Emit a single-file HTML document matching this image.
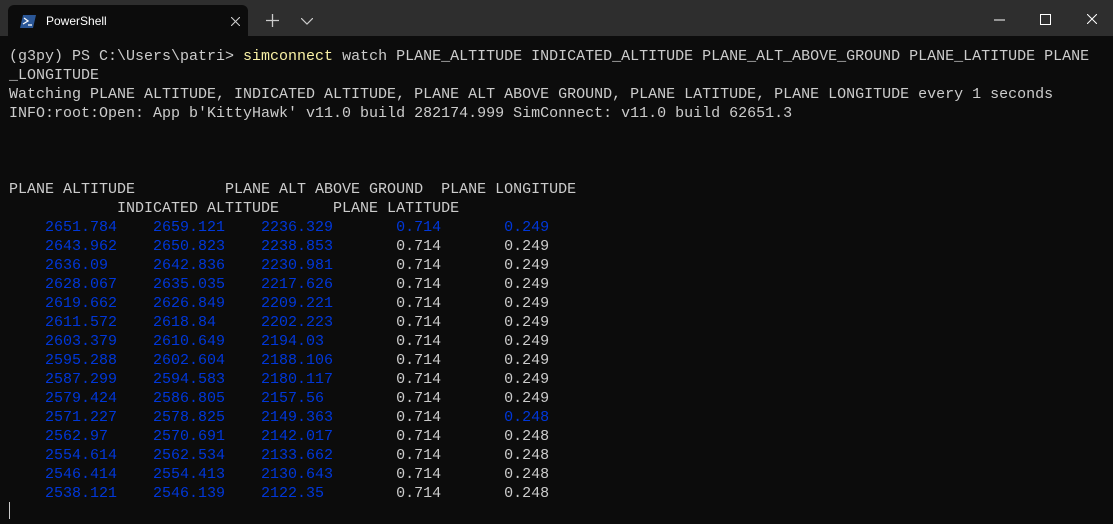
<!DOCTYPE html>
<html><head><style>
body{margin:0;width:1113px;height:524px;background:#0c0c0c;overflow:hidden;position:relative;font-family:"Liberation Sans",sans-serif}
#bar{position:absolute;left:0;top:0;width:1113px;height:36px;background:#2e2e2e}
#tab{position:absolute;left:8px;top:5px;width:240px;height:31px;background:#0c0c0c;border-radius:6px 6px 0 0}
#tab span{position:absolute;left:38px;top:9px;color:#fff;font-size:12px}
pre{position:absolute;left:9px;top:47px;margin:0;font-family:"Liberation Mono",monospace;font-size:15px;line-height:19px;color:#cccccc;letter-spacing:0}
.b{color:#0037da}.y{color:#f9f1a5}
#cur{position:absolute;left:9px;top:502px;width:1px;height:17px;background:#ccc}
</style></head><body>
<div id="bar">
<div id="tab">
<svg style="position:absolute;left:12px;top:10px" width="16" height="13" viewBox="0 0 16 13"><path d="M3 0h13l-3 13H0z" fill="#2b5797"/><path d="M4 3l4 3-5 3" stroke="#fff" stroke-width="1.3" fill="none"/><path d="M8 10h4" stroke="#fff" stroke-width="1.3"/></svg>
<span>PowerShell</span>
<svg style="position:absolute;left:223px;top:12px" width="9" height="9"><path d="M0 0L9 9M9 0L0 9" stroke="#ccc" stroke-width="1.1"/></svg>
</div>
<svg style="position:absolute;left:266px;top:14px" width="13" height="13"><path d="M6.5 0v13M0 6.5h13" stroke="#ccc" stroke-width="1.3"/></svg>
<svg style="position:absolute;left:301px;top:18px" width="12" height="7"><path d="M0 0l6 6 6-6" stroke="#ccc" stroke-width="1.2" fill="none"/></svg>
<svg style="position:absolute;left:994px;top:19px" width="11" height="2"><path d="M0 1h11" stroke="#fff"/></svg>
<svg style="position:absolute;left:1040px;top:14px" width="11" height="11"><rect x=".5" y=".5" width="10" height="10" stroke="#fff" fill="none"/></svg>
<svg style="position:absolute;left:1087px;top:14px" width="10" height="10"><path d="M0 0L10 10M10 0L0 10" stroke="#fff"/></svg>
</div>
<pre>(g3py) PS C:\Users\patri&gt; <span class="y">simconnect</span> watch PLANE_ALTITUDE INDICATED_ALTITUDE PLANE_ALT_ABOVE_GROUND PLANE_LATITUDE PLANE
_LONGITUDE
Watching PLANE ALTITUDE, INDICATED ALTITUDE, PLANE ALT ABOVE GROUND, PLANE LATITUDE, PLANE LONGITUDE every 1 seconds
INFO:root:Open: App b'KittyHawk' v11.0 build 282174.999 SimConnect: v11.0 build 62651.3



PLANE ALTITUDE          PLANE ALT ABOVE GROUND  PLANE LONGITUDE
            INDICATED ALTITUDE      PLANE LATITUDE
    <span class="b">2651.784    2659.121    2236.329       0.714       0.249</span>
    <span class="b">2643.962    2650.823    2238.853</span>       0.714       0.249
    <span class="b">2636.09     2642.836    2230.981</span>       0.714       0.249
    <span class="b">2628.067    2635.035    2217.626</span>       0.714       0.249
    <span class="b">2619.662    2626.849    2209.221</span>       0.714       0.249
    <span class="b">2611.572    2618.84     2202.223</span>       0.714       0.249
    <span class="b">2603.379    2610.649    2194.03 </span>       0.714       0.249
    <span class="b">2595.288    2602.604    2188.106</span>       0.714       0.249
    <span class="b">2587.299    2594.583    2180.117</span>       0.714       0.249
    <span class="b">2579.424    2586.805    2157.56 </span>       0.714       0.249
    <span class="b">2571.227    2578.825    2149.363</span>       0.714       <span class="b">0.248</span>
    <span class="b">2562.97     2570.691    2142.017</span>       0.714       0.248
    <span class="b">2554.614    2562.534    2133.662</span>       0.714       0.248
    <span class="b">2546.414    2554.413    2130.643</span>       0.714       0.248
    <span class="b">2538.121    2546.139    2122.35 </span>       0.714       0.248
</pre>
<div id="cur"></div>
</body></html>
